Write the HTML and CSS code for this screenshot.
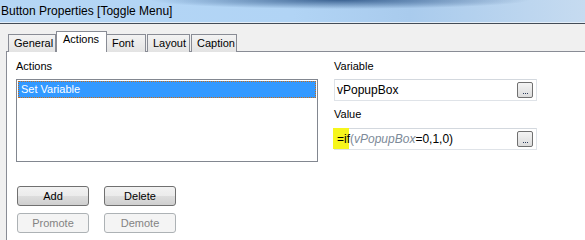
FILE: index.html
```html
<!DOCTYPE html>
<html lang="en">
<head>
    <meta charset="UTF-8">
    <title>Button Properties [Toggle Menu]</title>
    <link rel="stylesheet" href="styles.css">
</head>
<body>
    <div class="window">
        <div class="titlebar">Button Properties [Toggle Menu]</div>
        <div class="dialog">
            <div class="tabs">
                <div class="tab tab-general">General</div>
                <div class="tab tab-actions active">Actions</div>
                <div class="tab tab-font">Font</div>
                <div class="tab tab-layout">Layout</div>
                <div class="tab tab-caption">Caption</div>
            </div>
            <div class="panel">
                <div class="col-left">
                    <div class="label">Actions</div>
                    <div class="listbox">
                        <div class="list-item selected">Set Variable</div>
                    </div>
                    <div class="btn-row first">
                        <button class="btn">Add</button>
                        <button class="btn">Delete</button>
                    </div>
                    <div class="btn-row">
                        <button class="btn" disabled>Promote</button>
                        <button class="btn" disabled>Demote</button>
                    </div>
                </div>
                <div class="col-right">
                    <div class="label">Variable</div>
                    <div class="field">
                        <span class="field-text">vPopupBox</span>
                        <span class="dots"><i></i><i></i><i></i></span>
                    </div>
                    <div class="label value-label">Value</div>
                    <div class="field">
                        <span class="field-text expr">
                            <span class="marker"></span><span class="kw">=if</span><span class="arg">(</span><span class="arg var">vPopupBox</span><span class="kw">=0,1,0)</span>
                        </span>
                        <span class="dots"><i></i><i></i><i></i></span>
                    </div>
                </div>
            </div>
        </div>
    </div>
</body>
</html>
```

FILE: styles.css
```css
body {
    margin: 0;
    width: 585px;
    height: 240px;
    overflow: hidden;
    font-family: "Liberation Sans", Arial, sans-serif;
    font-size: 11px;
    color: #000;
    background-color: #f0f0f0;
}
.window {
    display: flex;
    flex-direction: column;
    height: 240px;
}
.titlebar {
    height: 22px;
    line-height: 22px;
    padding-left: 1px;
    font-size: 12px;
    color: #000;
    background:
        radial-gradient(ellipse 190px 9px at 340px 0, rgba(40, 80, 130, 0.85), rgba(40, 80, 130, 0) 100%),
        linear-gradient(90deg, #b5d6f5 0%, #b1d4f5 50%, #a9cbed 70%, #c6dbf0 100%);
    border-bottom: 1px solid #e4eef8;
    box-shadow: 0 1px 0 #434c57;
    margin-bottom: 1px;
}
.dialog {
    flex: 1;
    display: flex;
    flex-direction: column;
}
.tabs {
    display: flex;
    align-items: flex-end;
    height: 20px;
    margin-top: 7px;
    padding-left: 8px;
    position: relative;
    z-index: 1;
}
.tab {
    box-sizing: border-box;
    height: 18px;
    line-height: 17px;
    padding-left: 5px;
    border: 1px solid #898c95;
    border-bottom: none;
    background: linear-gradient(#f3f3f3, #e3e3e3);
    flex-shrink: 0;
    margin-bottom: -1px;
}
.tab-general { width: 48px; }
.tab-actions { width: 51px; }
.tab-font { width: 40px; margin-left: -1px; }
.tab-layout { width: 43px; margin-left: 1px; }
.tab-caption { width: 46px; margin-left: 1px; }
.tab.active {
    height: 21px;
    line-height: 15px;
    background: #fff;
    padding-left: 6px;
}
.panel {
    flex: 1;
    display: flex;
    gap: 16px;
    margin-left: 6px;
    padding: 8px 0 0 9px;
    background: #fff;
    border-top: 1px solid #898c95;
    border-left: 1px solid #898c95;
}
.label {
    height: 13px;
    line-height: 13px;
    margin-bottom: 6px;
}
.col-left {
    width: 302px;
}
.listbox {
    box-sizing: border-box;
    height: 83px;
    border: 1px solid #828790;
    padding: 1px;
}
.list-item {
    box-sizing: border-box;
    height: 17px;
    line-height: 15px;
    padding-left: 2px;
}
.list-item.selected {
    background: #3399ff;
    color: #fff;
    border: 1px dotted #c76c1a;
}
.btn-row {
    display: flex;
    gap: 15px;
    margin-left: 1px;
    margin-top: 7px;
}
.btn-row.first {
    margin-top: 24px;
}
.btn {
    box-sizing: border-box;
    width: 72px;
    height: 20px;
    padding: 0;
    font-family: "Liberation Sans", Arial, sans-serif;
    font-size: 11px;
    color: #000;
    border: 1px solid #707070;
    border-radius: 3px;
    background: linear-gradient(#f2f2f2 0%, #ebebeb 50%, #dddddd 51%, #cfcfcf 100%);
}
.btn:disabled {
    color: #838383;
    border-color: #adb2b5;
    background: #f4f4f4;
}
.col-right {
    width: 203px;
}
.value-label {
    margin-top: 7px;
    margin-bottom: 7px;
}
.field {
    box-sizing: border-box;
    height: 22px;
    display: flex;
    align-items: center;
    justify-content: space-between;
    padding: 0 3px 0 2px;
    border: 1px solid #dfe3e8;
    border-top-color: #d3d8de;
    font-size: 12px;
}
.field-text {
    position: relative;
}
.expr .kw,
.expr .arg {
    position: relative;
    z-index: 1;
}
.expr .arg {
    color: #7d8a98;
}
.expr .var {
    font-style: italic;
}
.marker {
    position: absolute;
    left: -4px;
    top: -4px;
    width: 16px;
    height: 21px;
    background: #f6f61c;
}
.dots {
    box-sizing: border-box;
    width: 16px;
    height: 16px;
    display: flex;
    justify-content: center;
    align-items: flex-end;
    gap: 1px;
    padding-bottom: 3px;
    border: 1px solid #707070;
    border-radius: 2px;
    background: linear-gradient(#f4f4f4, #dcdcdc);
}
.dots i {
    width: 1px;
    height: 1px;
    background: #2c3c5c;
}
```
